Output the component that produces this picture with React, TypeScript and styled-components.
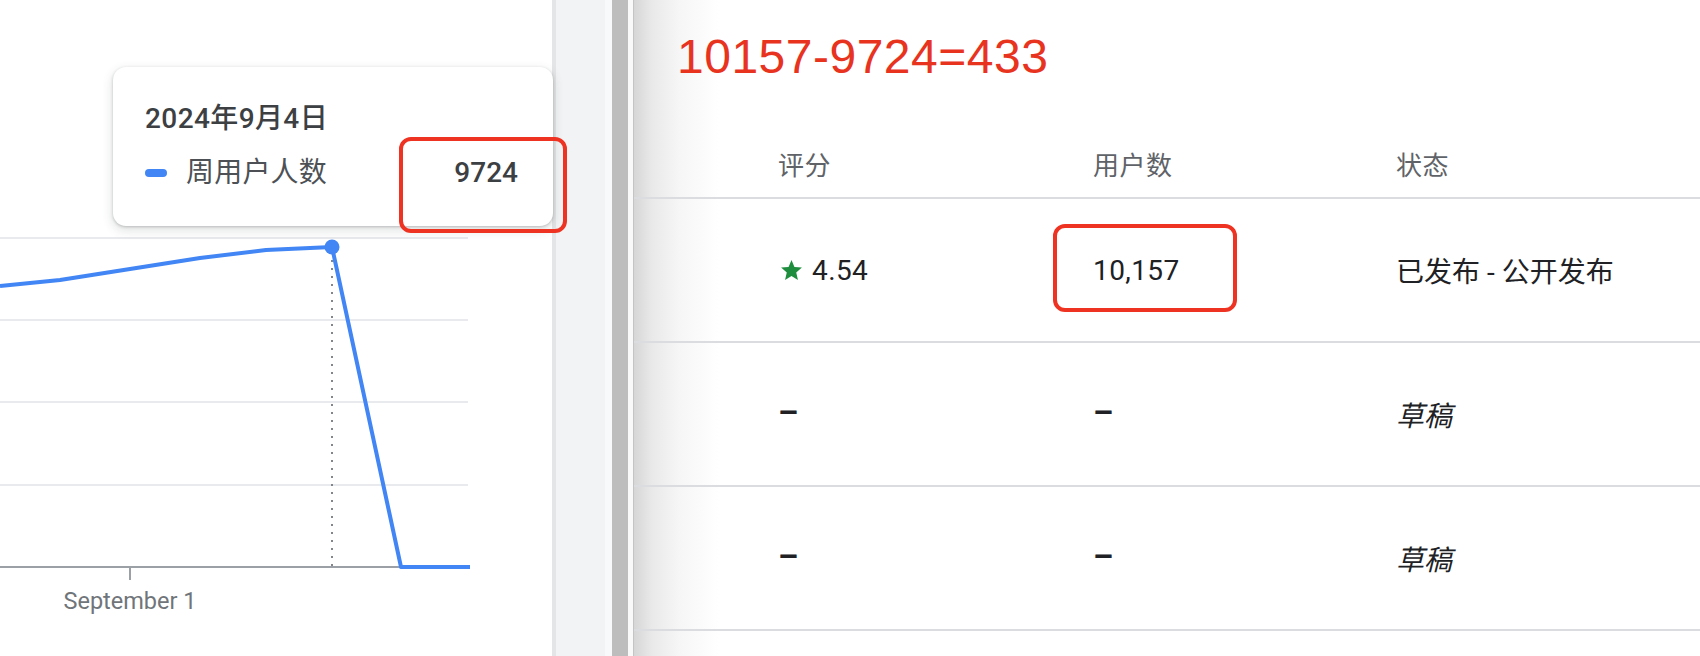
import React from "react";
import styled, { createGlobalStyle } from "styled-components";

const GlobalStyle = createGlobalStyle`
  html, body { margin: 0; padding: 0; background: #fff; }
  body {
    width: 1700px;
    height: 656px;
    overflow: hidden;
    font-family: Roboto, "Noto Sans CJK SC", sans-serif;
  }
`;

const Page = styled.div`
  display: flex;
  width: 1700px;
  height: 656px;
  overflow: hidden;
`;

const LeftPane = styled.div`
  position: relative;
  flex: none;
  width: 552px;
  height: 656px;
  background: #fff;
  z-index: 2;
`;

const Chart = styled.svg`
  display: block;
  width: 552px;
  height: 656px;
`;

const Tooltip = styled.div`
  position: absolute;
  left: 113px;
  top: 67px;
  width: 440px;
  height: 159px;
  box-sizing: border-box;
  padding: 36px 35px 0 32px;
  border-radius: 13px;
  background: #fff;
  box-shadow: 0 1px 3px rgba(60, 64, 67, 0.28), 0 4px 10px 2px rgba(60, 64, 67, 0.12);
`;

const TooltipDate = styled.div`
  font-size: 28px;
  line-height: 32px;
  font-weight: 500;
  color: #3c4043;
  letter-spacing: 0.4px;
`;

const LegendRow = styled.div`
  display: flex;
  align-items: center;
  margin-top: 22px;
  height: 32px;
`;

const Swatch = styled.span`
  flex: none;
  width: 22px;
  height: 8px;
  border-radius: 4px;
  background: #4285f4;
  margin-right: 19px;
`;

const LegendLabel = styled.span`
  font-size: 28px;
  line-height: 32px;
  color: #4d5156;
  letter-spacing: 0.2px;
`;

const LegendValue = styled.span`
  margin-left: auto;
  font-size: 28px;
  line-height: 32px;
  font-weight: 500;
  color: #3c4043;
`;

const Highlight = styled.div<{ $left: number; $top: number; $w: number; $h: number }>`
  position: absolute;
  left: ${(p) => p.$left}px;
  top: ${(p) => p.$top}px;
  width: ${(p) => p.$w}px;
  height: ${(p) => p.$h}px;
  box-sizing: border-box;
  border: 4px solid #ee3322;
  border-radius: 12px;
  pointer-events: none;
`;

const Gutter = styled.div`
  flex: none;
  width: 49px;
  height: 656px;
  background: #f1f3f4;
  border-left: 4px solid #e4e5e6;
  border-right: 7px solid #f8f9fa;
`;

const Splitter = styled.div`
  flex: none;
  width: 16px;
  height: 656px;
  background: #bdbdbd;
`;

const SplitGap = styled.div`
  flex: none;
  width: 5px;
  height: 656px;
  background: #f9f9f9;
  border-right: 1px solid #c4c4c4;
`;

const RightPane = styled.div`
  flex: 1;
  height: 656px;
  background: linear-gradient(90deg, #d6d6d6 0px, #e9e9e9 18px, #f6f6f6 45px, #ffffff 85px);
`;

const Title = styled.div`
  padding: 29px 0 0 43px;
  height: 56px;
  font-family: "Liberation Sans", Arial, sans-serif;
  font-size: 48px;
  line-height: 56px;
  color: #e8331f;
  letter-spacing: 0.5px;
`;

const Row = styled.div<{ $header?: boolean }>`
  display: grid;
  grid-template-columns: 315px 303px 1fr;
  padding-left: 144px;
  height: ${(p) => (p.$header ? "112px" : "142px")};
  align-items: ${(p) => (p.$header ? "end" : "stretch")};
  border-bottom: 2px solid #dadce0;
  box-sizing: content-box;
`;

const HeadCell = styled.div`
  padding-bottom: 15px;
  font-size: 26px;
  line-height: 32px;
  color: #5f6368;
  letter-spacing: 0.5px;
`;

const Cell = styled.div<{ $italic?: boolean }>`
  position: relative;
  display: flex;
  align-items: center;
  font-size: 28px;
  color: #202124;
  font-style: ${(p) => (p.$italic ? "italic" : "normal")};
`;

const Number = styled.span`
  letter-spacing: 0.4px;
`;

const Star = styled.svg`
  width: 25px;
  height: 25px;
  margin-left: 1px;
  margin-right: 8px;
  fill: #1e8e3e;
`;

const Dash = styled.span`
  font-size: 32px;
  font-weight: 700;
  margin-top: -4px;
`;

const linePoints = "0,286 60,280 130,269 200,258 266,250 332,247 401,567 470,567";

function LineChart() {
  const grid = [238, 320, 402, 485];
  return (
    <Chart viewBox="0 0 552 656">
      {grid.map((y) => (
        <line key={y} x1={0} x2={468} y1={y} y2={y} stroke="#e8eaed" strokeWidth={2} />
      ))}
      <line x1={0} x2={468} y1={567} y2={567} stroke="#9aa0a6" strokeWidth={2} />
      <line x1={130} x2={130} y1={567} y2={580} stroke="#9aa0a6" strokeWidth={2} />
      <line x1={332} x2={332} y1={252} y2={566} stroke="#80868b" strokeWidth={2} strokeDasharray="2 6" />
      <polyline
        points={linePoints}
        fill="none"
        stroke="#4285f4"
        strokeWidth={4}
        strokeLinejoin="round"
      />
      <circle cx={332} cy={247} r={7.5} fill="#4285f4" />
      <text
        x={130}
        y={609}
        textAnchor="middle"
        fontFamily="Roboto, sans-serif"
        fontSize={23.5}
        fill="#70757a"
      >
        September 1
      </text>
    </Chart>
  );
}

export default function App() {
  return (
    <>
      <GlobalStyle />
      <Page>
        <LeftPane>
          <LineChart />
          <Tooltip>
            <TooltipDate>2024年9月4日</TooltipDate>
            <LegendRow>
              <Swatch />
              <LegendLabel>周用户人数</LegendLabel>
              <LegendValue>9724</LegendValue>
            </LegendRow>
          </Tooltip>
          <Highlight $left={399} $top={137} $w={168} $h={96} />
        </LeftPane>
        <Gutter />
        <Splitter />
        <SplitGap />
        <RightPane>
          <Title>10157-9724=433</Title>
          <Row $header>
            <HeadCell>评分</HeadCell>
            <HeadCell>用户数</HeadCell>
            <HeadCell>状态</HeadCell>
          </Row>
          <Row>
            <Cell>
              <Star viewBox="0 0 24 24">
                <path d="M12 17.27L18.18 21l-1.64-7.03L22 9.24l-7.19-.61L12 2 9.19 8.63 2 9.24l5.46 4.73L5.82 21z" />
              </Star>
              <Number>4.54</Number>
            </Cell>
            <Cell>
              <Number>10,157</Number>
              <Highlight $left={-40} $top={25} $w={184} $h={88} />
            </Cell>
            <Cell>已发布 - 公开发布</Cell>
          </Row>
          <Row>
            <Cell><Dash>–</Dash></Cell>
            <Cell><Dash>–</Dash></Cell>
            <Cell $italic>草稿</Cell>
          </Row>
          <Row>
            <Cell><Dash>–</Dash></Cell>
            <Cell><Dash>–</Dash></Cell>
            <Cell $italic>草稿</Cell>
          </Row>
        </RightPane>
      </Page>
    </>
  );
}
